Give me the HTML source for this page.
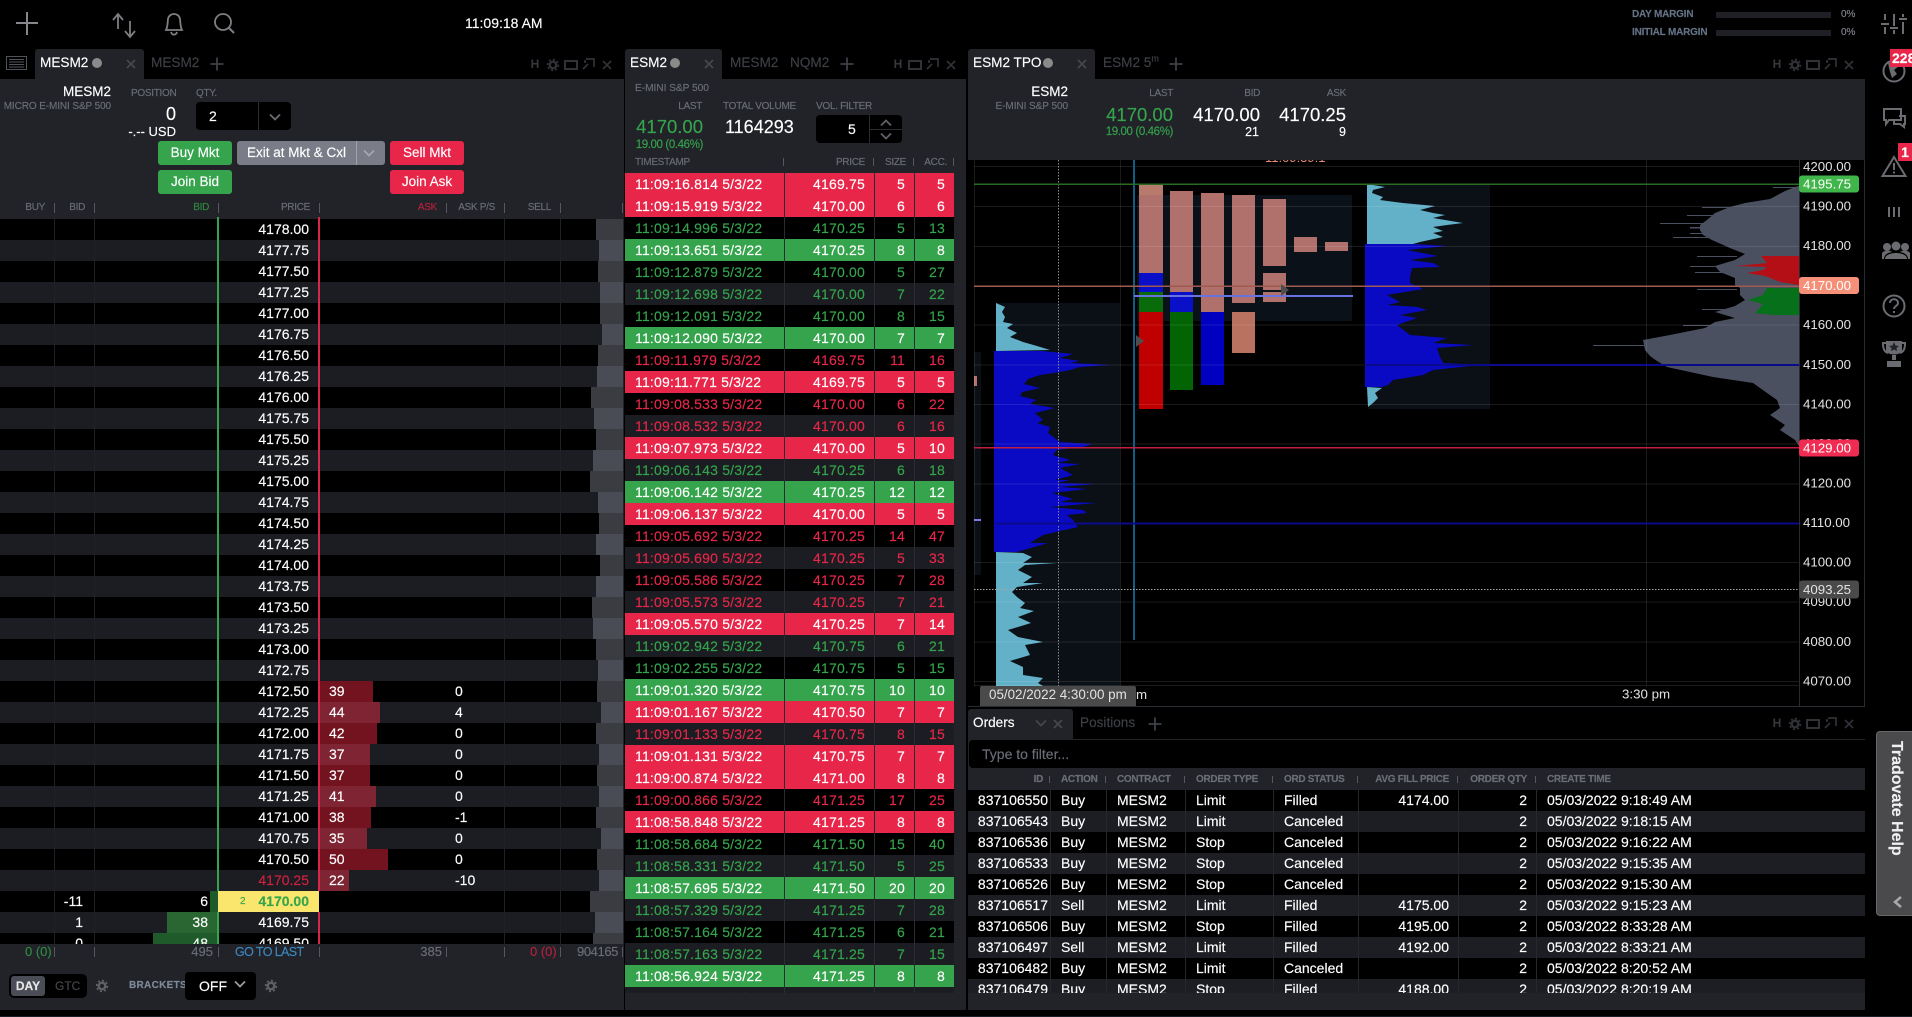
<!DOCTYPE html>
<html lang="en"><head><meta charset="utf-8"><title>Tradovate</title>
<style>
html,body{margin:0;padding:0;background:#000}
body{position:relative;width:1912px;height:1017px;overflow:hidden;font-family:"Liberation Sans",sans-serif;color:#fff;font-size:14px;-webkit-text-stroke:.15px}
.a{position:absolute;white-space:nowrap;line-height:14px}
.pn{position:absolute;background:#212329}
.s{font-size:10px;letter-spacing:-.3px;color:#6b6e77;line-height:12px}
.k{color:#3d4046}
.dot{position:absolute;width:10px;height:10px;border-radius:50%;background:#8a8a8a}
.btn{position:absolute;height:24px;line-height:24px;border-radius:3px;text-align:center;color:#fff;font-size:13.5px}
.gr{background:#35a44c}.rd{background:#e8264a}
.t{position:absolute;width:1px;height:10px;background:#55585f}
svg{position:absolute;overflow:visible}
#lad{position:absolute;left:0;top:219px;width:623px;height:725px;overflow:hidden}
.r{position:relative;height:21px;background:#000;line-height:21px}
.r:nth-child(even){background:#1b1d22}
.r span{position:absolute;top:0;white-space:nowrap}
.p{left:218px;width:91px;text-align:right}
.v{right:0;bottom:0;background:#3a3c41;height:21px}
.r:nth-child(even) .v{background:#4a4c55}
.ab{left:320px;height:21px;background:#72131f}
.r:nth-child(even) .ab{background:#7e2433}
.an{left:329px}.ps{left:455px}
.bb{right:405px;height:21px;background:#1f5a2a}
.r:nth-child(even) .bb{background:#2a6632}
.bn{left:118px;width:90px;text-align:right}
.bp{left:20px;width:63px;text-align:right}
.vl{position:absolute;width:1px;background:#1f2126;top:219px;height:725px}
#ts{position:absolute;left:625px;top:173px;width:329px;height:820px;overflow:hidden;background:#000}
.q{position:relative;height:22px;line-height:22px;letter-spacing:.2px;background:#000}
.q:nth-child(even){background:#1b1d22}
.q span{position:absolute;top:0}
.q span:nth-child(1){left:10px}
.q span:nth-child(2){right:89px}
.q span:nth-child(3){right:49px}
.q span:nth-child(4){right:9px}
.q.R,.q.R:nth-child(even){background:#e8264a}
.q.G,.q.G:nth-child(even){background:#35a44c}
.q.r{color:#e8264a}.q.g{color:#35a44c}
#ot{position:absolute;left:968px;top:790px;width:897px;height:203px;overflow:hidden}
.o{position:relative;height:21px;line-height:21px;background:#000}
.o:nth-child(even){background:#1c1e23}
.o span{position:absolute;top:0;white-space:nowrap}
.o span:nth-child(1){right:817px}
.o span:nth-child(2){left:93px}
.o span:nth-child(3){left:149px}
.o span:nth-child(4){left:228px}
.o span:nth-child(5){left:316px}
.o span:nth-child(6){right:416px}
.o span:nth-child(7){right:338px}
.o span:nth-child(8){left:579px}
.ol{position:absolute;width:1px;top:790px;height:203px;background:#26282e}
</style></head>
<body>
<svg width="0" height="0" style="position:absolute"><defs>
<g id="gear"><circle r="3.3" fill="none" stroke="currentColor" stroke-width="2.4"/><circle r="5.4" fill="none" stroke="currentColor" stroke-width="1.6" stroke-dasharray="2.1 2.1"/></g>
<g id="sq"><rect x="-6" y="-4" width="12" height="8" fill="none" stroke="currentColor" stroke-width="2"/></g>
<g id="ar"><path d="M-6 5 L-1 0 M-3 -5 H5 V3 M-4 -1 V-3 H-3" fill="none" stroke="currentColor" stroke-width="1.7"/></g>
<g id="xx"><path d="M-4 -4 L4 4 M4 -4 L-4 4" fill="none" stroke="currentColor" stroke-width="1.7"/></g>
<g id="pl"><path d="M-6.5 0 H6.5 M0 -6.5 V6.5" fill="none" stroke="currentColor" stroke-width="1.8"/></g>
<g id="ch"><path d="M-5 -2.5 L0 2.5 L5 -2.5" fill="none" stroke="currentColor" stroke-width="1.8"/></g>
</defs></svg>

<!-- top bar -->
<svg style="left:0;top:0;color:#7d7f83" width="260" height="48">
<path d="M27 12 V35 M16 23 H38" stroke="#85878a" stroke-width="2" fill="none"/>
<path d="M118 14 V29 M113 20 L118 14 L123 20 M130 21 V37 M125 31 L130 37 L135 31" stroke="#7d7f83" stroke-width="1.8" fill="none"/>
<path d="M166 30 C168 26 167.500 22 168 19 C168.500 16 171 14 174 14 C177 14 179.500 16 180 19 C180.500 22 180 26 182 30 Z M171 32 C172 35.500 176 35.500 177 32" stroke="#7d7f83" stroke-width="1.8" fill="none"/>
<circle cx="223" cy="22" r="8" stroke="#7d7f83" stroke-width="1.8" fill="none"/><path d="M229 28 L234 33" stroke="#7d7f83" stroke-width="2"/>
</svg>
<div class="a" style="left:465px;top:16px;font-size:14px">11:09:18 AM</div>
<div class="a s" style="left:1632px;top:9px;color:#647286;font-weight:bold;letter-spacing:-.2px">DAY MARGIN</div>
<div class="a s" style="left:1632px;top:27px;color:#647286;font-weight:bold;letter-spacing:-.2px">INITIAL MARGIN</div>
<div class="a" style="left:1716px;top:12px;width:115px;height:6px;background:#1e2025"></div>
<div class="a" style="left:1716px;top:30px;width:115px;height:6px;background:#1e2025"></div>
<div class="a s" style="left:1841px;top:9px;color:#80838a;letter-spacing:0">0%</div>
<div class="a s" style="left:1841px;top:27px;color:#80838a;letter-spacing:0">0%</div>

<!-- LEFT PANEL -->
<div class="pn" style="left:35px;top:49px;width:109px;height:31px;border-radius:3px 3px 0 0"></div>
<div class="pn" style="left:0;top:79px;width:624px;height:931px"></div>
<svg style="left:6px;top:56px" width="21" height="14"><rect x=".5" y=".5" width="20" height="13" fill="none" stroke="#50535a"/><path d="M3 3.500 H18 M3 6 H18 M3 8.500 H18 M3 11 H18" stroke="#50535a"/></svg>
<div class="a" style="left:40px;top:56px;font-size:13.600px">MESM2</div><div class="dot" style="left:92px;top:58px"></div>
<svg style="left:131px;top:64px;color:#45474c" width="1" height="1"><use href="#xx"/></svg>
<div class="a k" style="left:151px;top:56px;font-size:13.600px">MESM2</div>
<svg style="left:217px;top:64px;color:#3d4046" width="1" height="1"><use href="#pl"/></svg>
<svg style="left:526px;top:55px;color:#303237" width="90" height="18"><text x="9" y="13" text-anchor="middle" font-size="12" font-weight="bold" fill="#36383e" font-family="Liberation Sans">H</text><use href="#gear" x="27" y="10"/><use href="#sq" x="45" y="10"/><use href="#ar" x="63" y="9"/><use href="#xx" x="81" y="10"/></svg>

<div class="a" style="right:1801px;top:85px;font-size:13.500px">MESM2</div>
<div class="a s" style="right:1801px;top:101px;font-size:10px;letter-spacing:-.1px">MICRO E-MINI S&amp;P 500</div>
<div class="a s" style="left:131px;top:88px">POSITION</div>
<div class="a s" style="left:196px;top:88px">QTY.</div>
<div class="a" style="right:1736px;top:105px;font-size:18px;line-height:18px">0</div>
<div class="a" style="right:1736px;top:125px;font-size:13px">-.-- USD</div>
<div class="a" style="left:196px;top:102px;width:95px;height:28px;background:#000;border-radius:4px"></div>
<div class="a" style="left:258px;top:102px;width:1px;height:28px;background:#2a2c31"></div>
<div class="a" style="left:209px;top:109px;font-size:14px">2</div>
<svg style="left:275px;top:117px;color:#6a6c72" width="1" height="1"><use href="#ch"/></svg>
<div class="btn gr" style="left:158px;top:141px;width:74px">Buy Mkt</div>
<div class="btn" style="left:237px;top:141px;width:148px;background:#7a7d87;text-align:left;text-indent:10px">Exit at Mkt &amp; Cxl</div>
<div class="a" style="left:356px;top:141px;width:1px;height:24px;background:#a0a3ab"></div>
<svg style="left:369px;top:153px;color:#a5a7ae" width="1" height="1"><use href="#ch"/></svg>
<div class="btn rd" style="left:390px;top:141px;width:74px">Sell Mkt</div>
<div class="btn gr" style="left:158px;top:170px;width:74px">Join Bid</div>
<div class="btn rd" style="left:390px;top:170px;width:74px">Join Ask</div>
<div class="a s" style="right:1867px;top:202px">BUY</div><div class="t" style="left:54px;top:203px"></div>
<div class="a s" style="right:1827px;top:202px">BID</div><div class="t" style="left:94px;top:203px"></div>
<div class="a s" style="right:1703px;top:202px;color:#2f8a3f">BID</div><div class="t" style="left:218px;top:203px"></div>
<div class="a s" style="right:1602px;top:202px">PRICE</div><div class="t" style="left:319px;top:203px"></div>
<div class="a s" style="right:1475px;top:202px;color:#b5203e">ASK</div><div class="t" style="left:446px;top:203px"></div>
<div class="a s" style="right:1417px;top:202px">ASK P/S</div><div class="t" style="left:504px;top:203px"></div>
<div class="a s" style="right:1361px;top:202px">SELL</div><div class="t" style="left:560px;top:203px"></div><div class="t" style="left:622px;top:203px"></div>

<div id="lad">
<div class="r"><span class="v" style="left:596px"></span><span class="p">4178.00</span></div>
<div class="r"><span class="v" style="left:599px"></span><span class="p">4177.75</span></div>
<div class="r"><span class="v" style="left:598px"></span><span class="p">4177.50</span></div>
<div class="r"><span class="v" style="left:600px"></span><span class="p">4177.25</span></div>
<div class="r"><span class="v" style="left:600px"></span><span class="p">4177.00</span></div>
<div class="r"><span class="v" style="left:602px"></span><span class="p">4176.75</span></div>
<div class="r"><span class="v" style="left:598px"></span><span class="p">4176.50</span></div>
<div class="r"><span class="v" style="left:597px"></span><span class="p">4176.25</span></div>
<div class="r"><span class="v" style="left:591px"></span><span class="p">4176.00</span></div>
<div class="r"><span class="v" style="left:594px"></span><span class="p">4175.75</span></div>
<div class="r"><span class="v" style="left:596px"></span><span class="p">4175.50</span></div>
<div class="r"><span class="v" style="left:593px"></span><span class="p">4175.25</span></div>
<div class="r"><span class="v" style="left:590px"></span><span class="p">4175.00</span></div>
<div class="r"><span class="v" style="left:598px"></span><span class="p">4174.75</span></div>
<div class="r"><span class="v" style="left:599px"></span><span class="p">4174.50</span></div>
<div class="r"><span class="v" style="left:596px"></span><span class="p">4174.25</span></div>
<div class="r"><span class="v" style="left:600px"></span><span class="p">4174.00</span></div>
<div class="r"><span class="v" style="left:596px"></span><span class="p">4173.75</span></div>
<div class="r"><span class="v" style="left:592px"></span><span class="p">4173.50</span></div>
<div class="r"><span class="v" style="left:593px"></span><span class="p">4173.25</span></div>
<div class="r"><span class="v" style="left:596px"></span><span class="p">4173.00</span></div>
<div class="r"><span class="v" style="left:598px"></span><span class="p">4172.75</span></div>
<div class="r"><span class="v" style="left:597px"></span><span class="p">4172.50</span><span class="ab" style="width:53px"></span><span class="an">39</span><span class="ps">0</span></div>
<div class="r"><span class="v" style="left:601px"></span><span class="p">4172.25</span><span class="ab" style="width:60px"></span><span class="an">44</span><span class="ps">4</span></div>
<div class="r"><span class="v" style="left:596px"></span><span class="p">4172.00</span><span class="ab" style="width:57px"></span><span class="an">42</span><span class="ps">0</span></div>
<div class="r"><span class="v" style="left:599px"></span><span class="p">4171.75</span><span class="ab" style="width:50px"></span><span class="an">37</span><span class="ps">0</span></div>
<div class="r"><span class="v" style="left:597px"></span><span class="p">4171.50</span><span class="ab" style="width:50px"></span><span class="an">37</span><span class="ps">0</span></div>
<div class="r"><span class="v" style="left:599px"></span><span class="p">4171.25</span><span class="ab" style="width:56px"></span><span class="an">41</span><span class="ps">0</span></div>
<div class="r"><span class="v" style="left:596px"></span><span class="p">4171.00</span><span class="ab" style="width:51px"></span><span class="an">38</span><span class="ps">-1</span></div>
<div class="r"><span class="v" style="left:601px"></span><span class="p">4170.75</span><span class="ab" style="width:47px"></span><span class="an">35</span><span class="ps">0</span></div>
<div class="r"><span class="v" style="left:597px"></span><span class="p">4170.50</span><span class="ab" style="width:68px"></span><span class="an">50</span><span class="ps">0</span></div>
<div class="r"><span class="v" style="left:599px"></span><span class="p" style="color:#d3203f">4170.25</span><span class="ab" style="width:29px"></span><span class="an">22</span><span class="ps">-10</span></div>
<div class="r"><span class="v" style="left:590px"></span><span class="bb" style="width:8px"></span><span class="bp">-11</span><span class="bn">6</span><span style="left:218px;width:101px;height:21px;background:#fbe66d"></span><span style="left:240px;color:#35a44c;font-size:10px">2</span><span class="p" style="color:#35a44c;font-weight:bold">4170.00</span></div>
<div class="r"><span class="v" style="left:595px"></span><span class="bb" style="width:51px"></span><span class="bp">1</span><span class="bn">38</span><span class="p">4169.75</span></div>
<div class="r"><span class="v" style="left:593px"></span><span class="bb" style="width:65px"></span><span class="bp">0</span><span class="bn">48</span><span class="p">4169.50</span></div>
</div>
<div class="vl" style="left:54px"></div><div class="vl" style="left:94px"></div><div class="vl" style="left:504px"></div><div class="vl" style="left:560px"></div>
<div class="a" style="left:217px;top:217px;width:2px;height:674px;background:#35a44c"></div>
<div class="a" style="left:217px;top:912px;width:2px;height:32px;background:#35a44c"></div>
<div class="a" style="left:318px;top:217px;width:2px;height:674px;background:#d8264a"></div>
<div class="a" style="left:318px;top:912px;width:2px;height:32px;background:#d8264a"></div>
<div class="a" style="left:455px;top:217px;width:12px;height:3px;overflow:hidden"><div style="position:relative;top:-12px;line-height:14px">0</div></div>

<div class="a" style="left:25px;top:945px;font-size:13px;color:#2f8a3f">0 (0)</div><div class="t" style="left:54px;top:947px"></div><div class="t" style="left:94px;top:947px"></div>
<div class="a" style="right:1699px;top:945px;font-size:13px;color:#6b6e77">495</div><div class="t" style="left:218px;top:947px"></div>
<div class="a" style="left:235px;top:945px;font-size:12.500px;color:#3c86bd;letter-spacing:-.6px">GO TO LAST</div><div class="t" style="left:319px;top:947px"></div>
<div class="a" style="right:1470px;top:945px;font-size:13px;color:#6b6e77">385</div><div class="t" style="left:446px;top:947px"></div><div class="t" style="left:504px;top:947px"></div>
<div class="a" style="left:530px;top:945px;font-size:13px;color:#b5203e">0 (0)</div><div class="t" style="left:560px;top:947px"></div>
<div class="a" style="left:577px;top:945px;font-size:13px;color:#6b6e77;letter-spacing:-.4px">904165</div><div class="t" style="left:622px;top:947px"></div>

<div class="a" style="left:9px;top:974px;width:78px;height:24px;background:#000;border-radius:5px"></div>
<div class="a" style="left:11px;top:976px;width:34px;height:20px;background:#4a4d56;border-radius:3px;text-align:center;line-height:20px;font-size:12px;font-weight:bold;color:#e8e8e8">DAY</div>
<div class="a" style="left:55px;top:979px;font-size:12px;color:#44464b">GTC</div>
<svg style="left:102px;top:986px;color:#5f6167" width="1" height="1"><use href="#gear"/></svg>
<div class="a s" style="left:129px;top:980px;color:#7f8a99;font-weight:bold;letter-spacing:.3px">BRACKETS</div>
<div class="a" style="left:185px;top:972px;width:71px;height:28px;background:#000;border-radius:4px"></div>
<div class="a" style="left:199px;top:979px;font-size:14px">OFF</div>
<svg style="left:240px;top:984px;color:#9a9ca1" width="1" height="1"><use href="#ch"/></svg>
<svg style="left:271px;top:986px;color:#5f6167" width="1" height="1"><use href="#gear"/></svg>

<!-- MIDDLE PANEL -->
<div class="pn" style="left:625px;top:49px;width:97px;height:31px;border-radius:3px 3px 0 0"></div>
<div class="pn" style="left:625px;top:79px;width:341px;height:931px"></div>
<div class="a" style="left:630px;top:56px;font-size:13.600px">ESM2</div><div class="dot" style="left:670px;top:58px"></div>
<svg style="left:709px;top:64px;color:#45474c" width="1" height="1"><use href="#xx"/></svg>
<div class="a k" style="left:730px;top:56px;font-size:13.600px">MESM2</div>
<div class="a k" style="left:790px;top:56px;font-size:13.600px">NQM2</div>
<svg style="left:847px;top:64px;color:#3d4046" width="1" height="1"><use href="#pl"/></svg>
<svg style="left:889px;top:55px;color:#303237" width="70" height="18"><text x="9" y="13" text-anchor="middle" font-size="12" font-weight="bold" fill="#36383e" font-family="Liberation Sans">H</text><use href="#sq" x="26" y="10"/><use href="#ar" x="44" y="9"/><use href="#xx" x="62" y="10"/></svg>

<div class="a s" style="left:635px;top:82.500px;font-size:10.200px;letter-spacing:-.05px">E-MINI S&amp;P 500</div>
<div class="a s" style="right:1210px;top:101px">LAST</div>
<div class="a s" style="left:723px;top:101px;letter-spacing:-.25px">TOTAL VOLUME</div>
<div class="a s" style="left:816px;top:101px">VOL. FILTER</div>
<div class="a" style="right:1209px;top:116px;font-size:18.500px;line-height:22px;color:#35a44c">4170.00</div>
<div class="a" style="left:725px;top:116px;font-size:18px;line-height:22px">1164293</div>
<div class="a" style="right:1209px;top:138px;font-size:11.500px;letter-spacing:-.38px;color:#35a44c">19.00 (0.46%)</div>
<div class="a" style="left:816px;top:115px;width:86px;height:28px;background:#000;border-radius:4px"></div>
<div class="a" style="left:848px;top:122px;font-size:14px">5</div>
<div class="a" style="left:869px;top:115px;width:1px;height:28px;background:#2a2c31"></div>
<div class="a" style="left:869px;top:129px;width:33px;height:1px;background:#2a2c31"></div>
<svg style="left:886px;top:123px;color:#5f6167" width="1" height="1"><path d="M-5 2.500 L0 -2.500 L5 2.500" fill="none" stroke="currentColor" stroke-width="1.800"/></svg>
<svg style="left:886px;top:136px;color:#5f6167" width="1" height="1"><use href="#ch"/></svg>
<div class="a s" style="left:635px;top:157px">TIMESTAMP</div><div class="t" style="left:783px;top:158px;height:8px"></div>
<div class="a s" style="right:1047px;top:157px">PRICE</div><div class="t" style="left:873px;top:158px;height:8px"></div>
<div class="a s" style="right:1006px;top:157px">SIZE</div><div class="t" style="left:913px;top:158px;height:8px"></div>
<div class="a s" style="right:965px;top:157px">ACC.</div><div class="t" style="left:953px;top:158px;height:8px"></div>

<div id="ts">
<div class="q R"><span>11:09:16.814 5/3/22</span><span>4169.75</span><span>5</span><span>5</span></div>
<div class="q R"><span>11:09:15.919 5/3/22</span><span>4170.00</span><span>6</span><span>6</span></div>
<div class="q g"><span>11:09:14.996 5/3/22</span><span>4170.25</span><span>5</span><span>13</span></div>
<div class="q G"><span>11:09:13.651 5/3/22</span><span>4170.25</span><span>8</span><span>8</span></div>
<div class="q g"><span>11:09:12.879 5/3/22</span><span>4170.00</span><span>5</span><span>27</span></div>
<div class="q g"><span>11:09:12.698 5/3/22</span><span>4170.00</span><span>7</span><span>22</span></div>
<div class="q g"><span>11:09:12.091 5/3/22</span><span>4170.00</span><span>8</span><span>15</span></div>
<div class="q G"><span>11:09:12.090 5/3/22</span><span>4170.00</span><span>7</span><span>7</span></div>
<div class="q r"><span>11:09:11.979 5/3/22</span><span>4169.75</span><span>11</span><span>16</span></div>
<div class="q R"><span>11:09:11.771 5/3/22</span><span>4169.75</span><span>5</span><span>5</span></div>
<div class="q r"><span>11:09:08.533 5/3/22</span><span>4170.00</span><span>6</span><span>22</span></div>
<div class="q r"><span>11:09:08.532 5/3/22</span><span>4170.00</span><span>6</span><span>16</span></div>
<div class="q R"><span>11:09:07.973 5/3/22</span><span>4170.00</span><span>5</span><span>10</span></div>
<div class="q g"><span>11:09:06.143 5/3/22</span><span>4170.25</span><span>6</span><span>18</span></div>
<div class="q G"><span>11:09:06.142 5/3/22</span><span>4170.25</span><span>12</span><span>12</span></div>
<div class="q R"><span>11:09:06.137 5/3/22</span><span>4170.00</span><span>5</span><span>5</span></div>
<div class="q r"><span>11:09:05.692 5/3/22</span><span>4170.25</span><span>14</span><span>47</span></div>
<div class="q r"><span>11:09:05.690 5/3/22</span><span>4170.25</span><span>5</span><span>33</span></div>
<div class="q r"><span>11:09:05.586 5/3/22</span><span>4170.25</span><span>7</span><span>28</span></div>
<div class="q r"><span>11:09:05.573 5/3/22</span><span>4170.25</span><span>7</span><span>21</span></div>
<div class="q R"><span>11:09:05.570 5/3/22</span><span>4170.25</span><span>7</span><span>14</span></div>
<div class="q g"><span>11:09:02.942 5/3/22</span><span>4170.75</span><span>6</span><span>21</span></div>
<div class="q g"><span>11:09:02.255 5/3/22</span><span>4170.75</span><span>5</span><span>15</span></div>
<div class="q G"><span>11:09:01.320 5/3/22</span><span>4170.75</span><span>10</span><span>10</span></div>
<div class="q R"><span>11:09:01.167 5/3/22</span><span>4170.50</span><span>7</span><span>7</span></div>
<div class="q r"><span>11:09:01.133 5/3/22</span><span>4170.75</span><span>8</span><span>15</span></div>
<div class="q R"><span>11:09:01.131 5/3/22</span><span>4170.75</span><span>7</span><span>7</span></div>
<div class="q R"><span>11:09:00.874 5/3/22</span><span>4171.00</span><span>8</span><span>8</span></div>
<div class="q r"><span>11:09:00.866 5/3/22</span><span>4171.25</span><span>17</span><span>25</span></div>
<div class="q R"><span>11:08:58.848 5/3/22</span><span>4171.25</span><span>8</span><span>8</span></div>
<div class="q g"><span>11:08:58.684 5/3/22</span><span>4171.50</span><span>15</span><span>40</span></div>
<div class="q g"><span>11:08:58.331 5/3/22</span><span>4171.50</span><span>5</span><span>25</span></div>
<div class="q G"><span>11:08:57.695 5/3/22</span><span>4171.50</span><span>20</span><span>20</span></div>
<div class="q g"><span>11:08:57.329 5/3/22</span><span>4171.25</span><span>7</span><span>28</span></div>
<div class="q g"><span>11:08:57.164 5/3/22</span><span>4171.25</span><span>6</span><span>21</span></div>
<div class="q g"><span>11:08:57.163 5/3/22</span><span>4171.25</span><span>7</span><span>15</span></div>
<div class="q G"><span>11:08:56.924 5/3/22</span><span>4171.25</span><span>8</span><span>8</span></div>
<div class="q g"><span>11:08:56.923 5/3/22</span><span>4171.25</span><span>5</span><span>7</span></div>
</div>
<div class="a" style="left:784px;top:173px;width:1px;height:820px;background:#2a2c33"></div>
<div class="a" style="left:874px;top:173px;width:1px;height:820px;background:#2a2c33"></div>
<div class="a" style="left:914px;top:173px;width:1px;height:820px;background:#2a2c33"></div>

<!-- CHART PANEL -->
<div class="pn" style="left:968px;top:49px;width:127px;height:31px;border-radius:3px 3px 0 0"></div>
<div class="pn" style="left:968px;top:79px;width:897px;height:81px"></div>
<div class="a" style="left:973px;top:56px;font-size:13.600px">ESM2 TPO</div><div class="dot" style="left:1043px;top:58px"></div>
<svg style="left:1082px;top:64px;color:#45474c" width="1" height="1"><use href="#xx"/></svg>
<div class="a k" style="left:1103px;top:56px;font-size:13.600px">ESM2 5<sup style="font-size:9px;line-height:0">m</sup></div>
<svg style="left:1176px;top:64px;color:#3d4046" width="1" height="1"><use href="#pl"/></svg>
<svg style="left:1768px;top:55px;color:#303237" width="90" height="18"><text x="9" y="13" text-anchor="middle" font-size="12" font-weight="bold" fill="#36383e" font-family="Liberation Sans">H</text><use href="#gear" x="27" y="10"/><use href="#sq" x="45" y="10"/><use href="#ar" x="63" y="9"/><use href="#xx" x="81" y="10"/></svg>
<div class="a" style="right:844px;top:85px;font-size:13.500px">ESM2</div>
<div class="a s" style="right:844px;top:101px;font-size:10px;letter-spacing:-.05px">E-MINI S&amp;P 500</div>
<div class="a s" style="right:739px;top:88px">LAST</div>
<div class="a s" style="right:652px;top:88px">BID</div>
<div class="a s" style="right:566px;top:88px">ASK</div>
<div class="a" style="right:739px;top:104px;font-size:18.500px;line-height:22px;color:#35a44c">4170.00</div>
<div class="a" style="right:652px;top:104px;font-size:18.500px;line-height:22px">4170.00</div>
<div class="a" style="right:566px;top:104px;font-size:18.500px;line-height:22px">4170.25</div>
<div class="a" style="right:739px;top:125px;font-size:11.500px;letter-spacing:-.38px;color:#35a44c">19.00 (0.46%)</div>
<div class="a" style="right:653px;top:125px;font-size:12.500px">21</div>
<div class="a" style="right:566px;top:125px;font-size:12.500px">9</div>

<svg style="left:968px;top:160px;overflow:hidden" width="897" height="547" viewBox="968 160 897 547" font-family="Liberation Sans">
<rect x="974" y="352" width="7" height="223" fill="#0a1016"/>
<rect x="996" y="303" width="124" height="383" fill="#0a1016"/>
<rect x="1137" y="195" width="215" height="126" fill="#0a1118"/>
<rect x="1368" y="184" width="122" height="225" fill="#0a1016"/>
<text x="1265" y="162" font-size="13" fill="#e58a78">11:09:39:1</text>
<rect x="974" y="376" width="3" height="10" fill="#b5706c"/><rect x="974" y="519" width="7" height="2" fill="#7a7ae8"/>
<!-- left profile -->
<polygon fill="#62b1c9" points="996,303 1005,307 1002,312 1005,317 1003,322 1013,324 1007,328 1017,333 1010,337 1023,342 1037,346 1050,350 996,351"/>
<polygon fill="#0a0ac4" points="994,351 1042,351 1073,354 1060,358 1080,361 1070,363 1110,365 1080,367 1070,370 1060,372 1040,375 1028,379 1024,384 1040,388 1022,392 1020,396 1036,400 1030,404 1055,408 1035,413 1043,420 1037,423 1050,427 1048,433 1060,442 1092,444 1083,447 1057,450 1053,455 1070,460 1057,463 1080,464 1060,468 1073,475 1055,480 1070,480 1057,483 1095,484 1060,487 1087,489 1052,493 1073,499 1060,502 1097,503 1050,507 1083,510 1087,513 1067,515 1073,520 1078,527 1060,531 1043,535 1030,543 1048,543 1017,552 994,552"/>
<polygon fill="#62b1c9" points="996,552 1023,553 1032,557 1023,563 1057,563 1025,565 1018,570 1032,577 1023,583 1043,583 1017,587 1012,592 1017,597 1025,603 1020,608 1034,611 1018,617 1031,623 1008,630 1018,637 1043,642 1025,645 1030,655 1010,661 1023,667 1023,675 1043,678 1038,683 1043,686 996,686"/>
<!-- TPO blocks -->
<rect x="1139" y="184" width="24" height="11" fill="#b87a6c"/>
<rect x="1139" y="195" width="24" height="78" fill="#b0706c"/>
<rect x="1139" y="273" width="24" height="19" fill="#0a10c8"/>
<rect x="1139" y="292" width="24" height="20" fill="#0a6b0a"/>
<rect x="1139" y="312" width="24" height="97" fill="#c00000"/>
<rect x="1170" y="191" width="23" height="101" fill="#b0706c"/>
<rect x="1170" y="292" width="23" height="20" fill="#0a10c8"/>
<rect x="1170" y="312" width="23" height="78" fill="#036403"/>
<rect x="1201" y="193" width="23" height="119" fill="#b0706c"/>
<rect x="1201" y="312" width="23" height="73" fill="#0000c0"/>
<rect x="1232" y="195" width="23" height="108" fill="#b0706c"/>
<rect x="1232" y="312" width="23" height="41" fill="#b8725f"/>
<rect x="1263" y="199" width="23" height="67" fill="#b0706c"/>
<rect x="1263" y="273" width="23" height="17" fill="#b0706c"/>
<rect x="1263" y="292" width="23" height="10" fill="#b0706c"/>
<rect x="1294" y="237" width="23" height="15" fill="#b0706c"/>
<rect x="1325" y="242" width="23" height="9" fill="#b0706c"/>
<!-- right profile -->
<polygon fill="#62b1c9" points="1367,184 1385,187 1373,190 1372,193 1383,197 1380,200 1403,203 1435,206 1420,210 1433,213 1445,215 1433,218 1463,223 1447,225 1433,227 1443,231 1433,233 1443,237 1420,242 1413,244 1367,244"/>
<polygon fill="#0a0ac4" points="1365,244 1413,244 1447,246 1407,250 1438,256 1410,260 1433,263 1440,267 1412,268 1410,277 1410,283 1423,289 1387,295 1400,302 1387,305 1417,307 1427,310 1400,315 1417,318 1397,325 1410,335 1447,338 1433,343 1473,345 1437,348 1440,357 1443,363 1480,365 1433,370 1423,375 1393,380 1388,385 1382,387 1365,387"/>
<polygon fill="#62b1c9" points="1367,387 1382,388 1375,393 1378,398 1373,403 1368,407"/>
<!-- far right profile -->
<polygon fill="#4a5060" points="1799,186 1795,187 1785,191 1770,199 1745,203 1730,207 1715,213 1707,220 1700,225 1700,230 1703,235 1712,240 1730,248 1745,254 1735,260 1715,266 1720,272 1735,278 1735,285 1740,288 1740,295 1745,300 1735,306 1715,312 1735,318 1715,322 1705,328 1670,335 1643,340 1645,350 1650,356 1657,361 1667,367 1713,377 1753,383 1767,393 1777,400 1780,408 1770,415 1785,425 1780,430 1795,440 1799,446"/>
<g fill="#4a5060">
<rect x="1773" y="187" width="26" height="1"/><rect x="1702" y="207" width="40" height="1"/><rect x="1687" y="215" width="30" height="1"/><rect x="1660" y="223" width="50" height="1"/><rect x="1690" y="227" width="20" height="1.500"/><rect x="1690" y="233" width="20" height="1"/><rect x="1673" y="237" width="35" height="1"/>
<rect x="1697" y="256" width="40" height="1"/><rect x="1690" y="266" width="30" height="1"/><rect x="1695" y="272" width="30" height="1"/><rect x="1697" y="289" width="40" height="1"/><rect x="1702" y="309" width="30" height="1"/><rect x="1683" y="325" width="30" height="1"/><rect x="1693" y="333" width="20" height="1"/>
<rect x="1593" y="345" width="60" height="1"/><rect x="1635" y="365" width="20" height="1"/><rect x="1753" y="382" width="15" height="1"/><rect x="1783" y="389" width="16" height="1"/>
</g>
<polygon fill="#b40f16" points="1799,256 1761,256 1767,263 1736,266 1767,267 1763,270 1747,273 1765,276 1780,282 1799,285"/>
<polygon fill="#07701a" points="1799,288 1767,288 1763,295 1748,300 1763,304 1755,313 1773,315 1799,315"/>
<!-- grid -->
<g stroke="#fff" stroke-opacity=".1" fill="none">
<path d="M974 166.500 H1799 M974 206.500 H1799 M974 246.500 H1799 M974 325 H1799 M974 365 H1799 M974 404.500 H1799 M974 444 H1799 M974 484 H1799 M974 562.500 H1799 M974 602 H1799 M974 642 H1799 M974 681.500 H1799 M974 685.500 H1799"/>
<path d="M974.500 160 V686 M1120.500 160 V686 M1646.500 160 V686"/>
</g>
<path d="M1799.500 160 V706 M1864.500 160 V706 M968 706.500 H1865" stroke="#2a2c33" fill="none"/>
<path d="M1058.500 160 V686" stroke="#8b8b8b" stroke-dasharray="1.500 1.500" fill="none"/>
<rect x="1133" y="160" width="2" height="480" fill="#0e5f85"/>
<rect x="974" y="183.500" width="825" height="1.500" fill="#2a6b24"/>
<rect x="974" y="285.500" width="825" height="1.500" fill="#a05a50"/>
<rect x="974" y="447" width="825" height="1.500" fill="#c0203f"/>
<rect x="1134" y="295" width="219" height="2" fill="#6a72e0"/>
<rect x="1365" y="364" width="434" height="2" fill="#0a0a8c"/>
<rect x="996" y="522.500" width="803" height="2" fill="#0a0a8c"/>
<path d="M974 589.500 H1799" stroke="#a8a8a8" stroke-dasharray="1.500 1.500" fill="none"/>
<path d="M1289 290 L1281 284 V296 Z" fill="#4d4d4d"/><path d="M1136 335 L1144 341 L1136 347 Z" fill="#4d4d4d"/>
<!-- axis -->
<g font-size="13.300" fill="#e2e2e2">
<text x="1803" y="171">4200.00</text><text x="1803" y="210.500">4190.00</text><text x="1803" y="250">4180.00</text><text x="1803" y="329">4160.00</text><text x="1803" y="369">4150.00</text><text x="1803" y="408.500">4140.00</text><text x="1803" y="448">4130.00</text><text x="1803" y="487.500">4120.00</text><text x="1803" y="527">4110.00</text><text x="1803" y="566.500">4100.00</text><text x="1803" y="606">4090.00</text><text x="1803" y="646">4080.00</text><text x="1803" y="685.500">4070.00</text>
</g>
<rect x="1799" y="175.500" width="60" height="17" rx="3" fill="#3fb54a"/><text x="1803" y="188.500" font-size="13.300" fill="#fff">4195.75</text>
<rect x="1799" y="277" width="60" height="17" rx="3" fill="#f58f78"/><text x="1803" y="290" font-size="13.300" fill="#fff">4170.00</text>
<rect x="1799" y="439.500" width="60" height="17" rx="3" fill="#f02c52"/><text x="1803" y="452.500" font-size="13.300" fill="#fff">4129.00</text>
<rect x="1799" y="580.500" width="60" height="18" rx="3" fill="#4a4a4a"/><text x="1803" y="594" font-size="13.300" fill="#e2e2e2">4093.25</text>
<text x="1622" y="698.500" font-size="13.300" fill="#e2e2e2">3:30 pm</text>
<text x="1136" y="699" font-size="13.300" fill="#e2e2e2">m</text>
<path d="M980 688 a2 2 0 0 1 2 -2 H1134 a2 2 0 0 1 2 2 V706 H980 Z" fill="#4a4a4a"/>
<text x="989" y="699" font-size="13.400" fill="#e2e2e2">05/02/2022 4:30:00 pm</text>
</svg>

<!-- ORDERS PANEL -->
<div class="pn" style="left:968px;top:709px;width:105px;height:31px;border-radius:3px 3px 0 0"></div>
<div class="pn" style="left:968px;top:739px;width:897px;height:271px"></div>
<div class="a" style="left:973px;top:716px;font-size:13.600px">Orders</div>
<svg style="left:1041px;top:723px;color:#45474c" width="1" height="1"><use href="#ch"/></svg>
<svg style="left:1058px;top:724px;color:#45474c" width="1" height="1"><use href="#xx"/></svg>
<div class="a k" style="left:1080px;top:716px;font-size:13.600px">Positions</div>
<svg style="left:1155px;top:724px;color:#3d4046" width="1" height="1"><use href="#pl"/></svg>
<svg style="left:1768px;top:714px;color:#303237" width="90" height="18"><text x="9" y="13" text-anchor="middle" font-size="12" font-weight="bold" fill="#36383e" font-family="Liberation Sans">H</text><use href="#gear" x="27" y="10"/><use href="#sq" x="45" y="10"/><use href="#ar" x="63" y="9"/><use href="#xx" x="81" y="10"/></svg>
<div class="a" style="left:969px;top:740px;width:896px;height:28px;background:#000;border-radius:4px 0 0 4px"></div>
<div class="a" style="left:982px;top:747px;font-size:14px;color:#6b6e77">Type to filter...</div>
<div class="a s" style="right:869px;top:774px;font-weight:bold">ID</div><div class="t" style="left:1049px;top:776px;height:7px"></div>
<div class="a s" style="left:1061px;top:774px;font-weight:bold">ACTION</div><div class="t" style="left:1105px;top:776px;height:7px"></div>
<div class="a s" style="left:1117px;top:774px;font-weight:bold">CONTRACT</div><div class="t" style="left:1184px;top:776px;height:7px"></div>
<div class="a s" style="left:1196px;top:774px;font-weight:bold">ORDER TYPE</div><div class="t" style="left:1272px;top:776px;height:7px"></div>
<div class="a s" style="left:1284px;top:774px;font-weight:bold">ORD STATUS</div><div class="t" style="left:1357px;top:776px;height:7px"></div>
<div class="a s" style="right:463px;top:774px;font-weight:bold">AVG FILL PRICE</div><div class="t" style="left:1457px;top:776px;height:7px"></div>
<div class="a s" style="right:385px;top:774px;font-weight:bold">ORDER QTY</div><div class="t" style="left:1535px;top:776px;height:7px"></div>
<div class="a s" style="left:1547px;top:774px;font-weight:bold">CREATE TIME</div>
<div id="ot">
<div class="o"><span>837106550</span><span>Buy</span><span>MESM2</span><span>Limit</span><span>Filled</span><span>4174.00</span><span>2</span><span>05/03/2022 9:18:49 AM</span></div>
<div class="o"><span>837106543</span><span>Buy</span><span>MESM2</span><span>Limit</span><span>Canceled</span><span></span><span>2</span><span>05/03/2022 9:18:15 AM</span></div>
<div class="o"><span>837106536</span><span>Buy</span><span>MESM2</span><span>Stop</span><span>Canceled</span><span></span><span>2</span><span>05/03/2022 9:16:22 AM</span></div>
<div class="o"><span>837106533</span><span>Buy</span><span>MESM2</span><span>Stop</span><span>Canceled</span><span></span><span>2</span><span>05/03/2022 9:15:35 AM</span></div>
<div class="o"><span>837106526</span><span>Buy</span><span>MESM2</span><span>Stop</span><span>Canceled</span><span></span><span>2</span><span>05/03/2022 9:15:30 AM</span></div>
<div class="o"><span>837106517</span><span>Sell</span><span>MESM2</span><span>Limit</span><span>Filled</span><span>4175.00</span><span>2</span><span>05/03/2022 9:15:23 AM</span></div>
<div class="o"><span>837106506</span><span>Buy</span><span>MESM2</span><span>Stop</span><span>Filled</span><span>4195.00</span><span>2</span><span>05/03/2022 8:33:28 AM</span></div>
<div class="o"><span>837106497</span><span>Sell</span><span>MESM2</span><span>Limit</span><span>Filled</span><span>4192.00</span><span>2</span><span>05/03/2022 8:33:21 AM</span></div>
<div class="o"><span>837106482</span><span>Buy</span><span>MESM2</span><span>Limit</span><span>Canceled</span><span></span><span>2</span><span>05/03/2022 8:20:52 AM</span></div>
<div class="o"><span>837106479</span><span>Buy</span><span>MESM2</span><span>Stop</span><span>Filled</span><span>4188.00</span><span>2</span><span>05/03/2022 8:20:19 AM</span></div>
</div>
<div class="ol" style="left:1050px"></div><div class="ol" style="left:1106px"></div><div class="ol" style="left:1185px"></div><div class="ol" style="left:1273px"></div><div class="ol" style="left:1358px"></div><div class="ol" style="left:1458px"></div><div class="ol" style="left:1536px"></div>

<!-- SIDEBAR -->
<svg style="left:1870px;top:0" width="42" height="380" viewBox="1870 0 42 380" fill="none" stroke="#6a6c72" stroke-width="2">
<path d="M1885 14 V20 M1885 27 V34 M1894 14 V26 M1894 30 V34 M1903 14 V17 M1903 22 V34"/><path d="M1881 24 H1889 M1890 28 H1898 M1899 19 H1907"/>
<circle cx="1894" cy="71" r="10.500"/><path d="M1888 63 L1895 62 L1899 66 L1894 70 L1897 74 L1892 78 L1890 72 Z" fill="#6a6c72" stroke="none"/>
<path d="M1884 109 H1901 V120 H1889 L1886 124 V120 H1884 Z"/><path d="M1899 116 H1905 V124 H1904 V127 L1900 124 H1894 V120" />
<path d="M1894 157 L1882.500 176 H1905.500 Z"/><path d="M1894 163 V170 M1894 171.500 V173.500"/>
<path d="M1889 207 V217 M1894 207 V217 M1899 207 V217"/>
<g fill="#6a6c72" stroke="none"><circle cx="1896" cy="246" r="4.500"/><circle cx="1887" cy="247" r="4"/><circle cx="1905" cy="247" r="4"/><path d="M1885 259 C1885 251 1907 251 1907 259 Z"/><path d="M1882 259 C1878 259 1878 259 1882 259 Z"/><path d="M1882 259 V253 C1884 250 1890 250 1892 252 C1886 253 1884 256 1884 259 Z M1910 259 V253 C1908 250 1902 250 1900 252 C1906 253 1908 256 1908 259 Z"/></g>
<circle cx="1894" cy="306" r="10.500"/><path d="M1890 303 C1890 298 1898 298 1898 303 C1898 306 1894 306 1894 309 M1894 311 V313"/>
<path d="M1886 341 H1902 V350 C1902 356 1886 356 1886 350 Z" fill="#6a6c72" stroke="none"/><path d="M1886 343 H1883 C1883 350 1885 352 1888 353 M1902 343 H1905 C1905 350 1903 352 1900 353"/>
<path d="M1892 355 H1896 V360 H1892 Z" fill="#6a6c72" stroke="none"/><rect x="1887" y="361" width="14" height="6" fill="#6a6c72" stroke="none"/>
<path d="M1894 342 L1895.500 345.500 L1899 346 L1896.500 348 L1897 351 L1894 349.500 L1891 351 L1891.500 348 L1889 346 L1892.500 345.500 Z" fill="#212329" stroke="none"/>
</svg>
<div class="a" style="left:1890px;top:49px;width:22px;height:18px;background:#e8264a;overflow:hidden;font-size:14px;font-weight:bold;line-height:18px;text-indent:2px">228</div>
<div class="a" style="left:1898px;top:143px;width:14px;height:18px;background:#e8264a;font-size:14px;font-weight:bold;line-height:18px;text-align:center">1</div>

<!-- help tab -->
<div class="a" style="left:1876px;top:731px;width:36px;height:185px;background:#4a4a4c;border:1px solid #666;border-right:0;border-radius:4px 0 0 4px;box-sizing:border-box"></div>
<div class="a" style="left:1896px;top:741px;transform-origin:0 0;transform:translateX(8px) rotate(90deg);font-size:16px;font-weight:bold;line-height:16px;color:#f0f0f0">Tradovate Help</div>
<svg style="left:1898px;top:902px" width="1" height="1"><path d="M3 -5 L-3 0 L3 5" fill="none" stroke="#a8a8a8" stroke-width="2.500"/></svg>

<div class="a" style="left:0;top:1016px;width:1912px;height:1px;background:#1a2028"></div>
</body></html>
